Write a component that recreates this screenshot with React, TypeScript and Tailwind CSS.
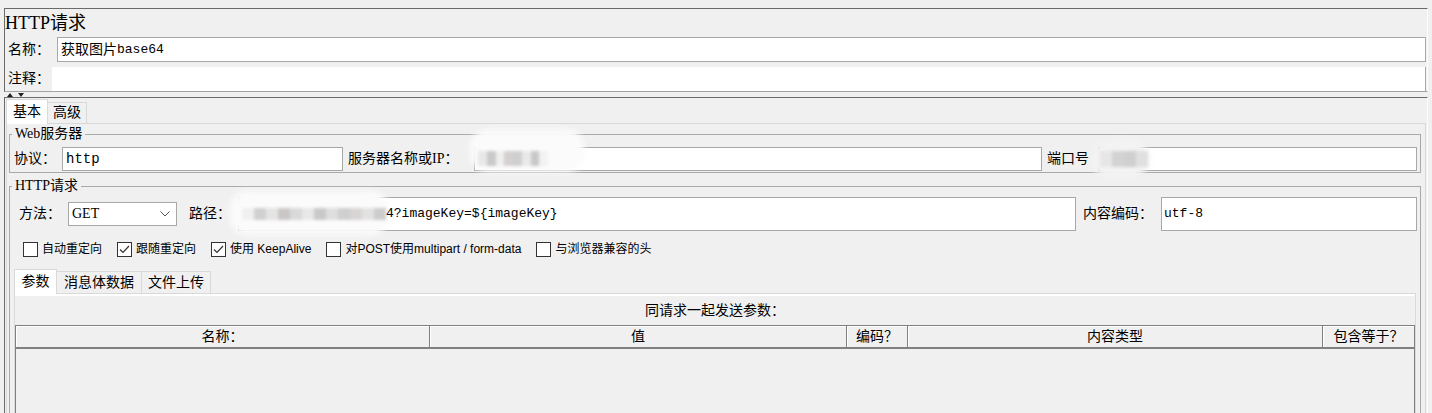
import React from "react";

const MONO = "font-['Liberation_Mono','Noto_Sans_CJK_SC',monospace] text-[13px]";
const SANS = "font-['Liberation_Sans','Noto_Sans_CJK_SC',sans-serif] text-[12px] leading-[14px]";

function Check({ checked }: { checked?: boolean }) {
  return (
    <span className="w-[15px] h-[15px] bg-white border border-[#333333] flex items-center justify-center shrink-0">
      {checked && (
        <svg width="11" height="9" viewBox="0 0 11 9">
          <polyline points="1,4.5 4,7.5 10,1" fill="none" stroke="#333" strokeWidth="1.2" />
        </svg>
      )}
    </span>
  );
}

function Blocks({ colors }: { colors: string[] }) {
  return (
    <span className="flex h-full blur-[1.5px]">
      {colors.map((c, i) => (
        <span key={i} className="flex-1 h-full" style={{ backgroundColor: c }} />
      ))}
    </span>
  );
}

function CheckItem({ checked, children }: { checked?: boolean; children: React.ReactNode }) {
  return (
    <div className="flex items-center gap-[4px]">
      <Check checked={checked} />
      <span className={SANS}>{children}</span>
    </div>
  );
}

export default function App() {
  return (
    <div className="w-[1432px] h-[413px] overflow-hidden bg-[#f0f0f0] text-black font-['Liberation_Serif','Noto_Sans_CJK_SC',serif] text-[14px] leading-[16px] pt-[8px] px-[4px]">
      {/* top panel */}
      <div className="border border-t-[#6b6b6b] border-l-[#6b6b6b] border-b-[#a3a3a3] border-r-[#fdfdfd]">
        <div className="h-[28px] flex items-center text-[18px] leading-[20px]">HTTP请求</div>
        <div className="h-[25px] flex">
          <div className="w-[52px] pl-[3px] flex items-center">名称：</div>
          <div className={`flex-1 mr-[1px] bg-white border border-[#a8a8a8] flex items-center pl-[3px] ${MONO}`}>
            <span className="text-[14px]">获取图片</span>base64
          </div>
        </div>
        <div className="h-[5px]" />
        <div className="h-[24px] flex">
          <div className="w-[47px] pl-[3px] flex items-center">注释：</div>
          <div className="flex-1 mr-[1px] bg-white border-r border-[#a8a8a8]" />
        </div>
      </div>

      {/* split divider */}
      <div className="h-[5px] flex items-end gap-[5px] pl-[3px]">
        <svg width="6" height="4" viewBox="0 0 6 4">
          <polygon points="3,0 6,4 0,4" fill="#222" />
        </svg>
        <svg width="6" height="4" viewBox="0 0 6 4">
          <polygon points="0,0 6,0 3,4" fill="#222" />
        </svg>
      </div>

      {/* lower panel */}
      <div className="h-[330px] border-t border-l border-r border-t-[#6b6b6b] border-l-[#6b6b6b] border-r-[#fdfdfd]">
        <div className="flex items-end pt-[1px] pl-[1px]">
          <div className="relative z-10 w-[42px] h-[25px] -mb-[1px] bg-white border border-b-0 border-[#d9d9d9] flex items-center justify-center pb-[1px]">
            基本
          </div>
          <div className="w-[39px] h-[21px] border border-b-0 border-l-0 border-[#d9d9d9] flex items-center justify-center">
            高级
          </div>
        </div>

        <div className="h-[300px] mx-[1px] border border-b-0 border-[#d9d9d9]">
          {/* Web server fieldset */}
          <fieldset className="ml-[2px] mr-[4px] mt-[2px] border border-[#a9a9a9] pb-[1px]">
            <legend className="ml-[2px] px-[3px] leading-[16px]">Web服务器</legend>
            <div className="mt-[5px] h-[24px] flex items-center pl-[4px] pr-[3px]">
              <div className="w-[48px]">协议：</div>
              <div className={`w-[281px] h-[24px] bg-white border border-[#a8a8a8] flex items-center pl-[3px] ${MONO} text-[14px]`}>
                http
              </div>
              <div className="w-[5px]" />
              <div className="w-[126px]">服务器名称或IP：</div>
              <div className="relative flex-1 h-[24px] bg-white border border-[#a8a8a8]">
                <span className="absolute left-[-5px] top-[-19px] w-[114px] h-[43px] rounded-[18px] bg-[#fbfbfb] blur-[3px]" />
                <span className="absolute left-[3px] top-[3px] w-[70px] h-[15px]">
                  <Blocks colors={["#e8e8e8", "#c9c9c9", "#efefef", "#d6cfcf", "#cfcfcf", "#e9e9e9", "#c8c8c8", "#f2f2f2"]} />
                </span>
              </div>
              <div className="w-[5px]" />
              <div className="w-[51px]">端口号</div>
              <div className="relative w-[319px] h-[24px] bg-white border border-[#a8a8a8]">
                <span className="absolute left-[-8px] top-[-8px] w-[58px] h-[38px] rounded-full bg-[#f3f3f3] blur-[3px]" />
                <span className="absolute left-[1px] top-[3px] w-[48px] h-[16px]">
                  <Blocks colors={["#e6e6e6", "#d3d3d3", "#cfcfcf", "#e0e0e0"]} />
                </span>
              </div>
            </div>
          </fieldset>

          {/* HTTP request fieldset */}
          <fieldset className="ml-[2px] mr-[4px] mt-[5px] border border-[#a9a9a9] h-[260px]">
            <legend className="ml-[2px] px-[3px] leading-[16px]">HTTP请求</legend>
            <div className="mt-[3px] h-[34px] flex items-center pl-[9px] pr-[3px]">
              <div className="w-[49px]">方法：</div>
              <div className="w-[109px] h-[24px] bg-white border border-[#a8a8a8] flex items-center justify-between pl-[3px] pr-[6px]">
                <span className="text-[14px]">GET</span>
                <svg width="10" height="6" viewBox="0 0 10 6">
                  <polyline points="0.5,0.5 5,5 9.5,0.5" fill="none" stroke="#555" strokeWidth="1" />
                </svg>
              </div>
              <div className="w-[12px]" />
              <div className="w-[49px]">路径：</div>
              <div className={`relative flex-1 h-[34px] bg-white border border-[#a8a8a8] flex items-center pl-[3px] ${MONO}`}>
                <span className="absolute left-[-9px] top-[-7px] w-[158px] h-[44px] rounded-[16px] bg-[#fbfbfb] blur-[3px]" />
                <span className="relative w-[144px] h-[12px]">
                  <Blocks colors={["#f0f0f0", "#d0d0d0", "#e4e4e4", "#cbc6c6", "#d9d9d9", "#e8e8e8", "#c9c9c9", "#dedede", "#cfcfcf", "#d8d4d4", "#e2e2e2", "#cccccc"]} />
                </span>
                <span className="relative">4?imageKey=${"{"}imageKey{"}"}</span>
              </div>
              <div className="w-[7px]" />
              <div className="w-[78px]">内容编码：</div>
              <div className={`w-[256px] h-[34px] bg-white border border-[#a8a8a8] flex items-center pl-[2px] ${MONO}`}>
                utf-8
              </div>
            </div>

            <div className="mt-[10px] h-[16px] flex items-center gap-[15px] pl-[13px]">
              <CheckItem>自动重定向</CheckItem>
              <CheckItem checked>跟随重定向</CheckItem>
              <CheckItem checked>使用 KeepAlive</CheckItem>
              <CheckItem>对POST使用multipart / form-data</CheckItem>
              <CheckItem>与浏览器兼容的头</CheckItem>
            </div>

            {/* sub tabs */}
            <div className="mt-[12px] flex items-end pl-[4px]">
              <div className="relative z-10 w-[43px] h-[25px] -mb-[1px] bg-white border border-b-0 border-[#d9d9d9] flex items-center justify-center pb-[1px]">
                参数
              </div>
              <div className="w-[85px] h-[22px] border border-b-0 border-l-0 border-[#d9d9d9] flex items-center justify-center">
                消息体数据
              </div>
              <div className="w-[69px] h-[22px] border border-b-0 border-l-0 border-[#d9d9d9] flex items-center justify-center">
                文件上传
              </div>
            </div>

            <div className="ml-[4px] mr-[4px] h-[200px] border border-b-0 border-[#d9d9d9]">
              <div className="h-[2px] bg-white" />
              <div className="h-[29px] flex items-center justify-center">同请求一起发送参数：</div>
              <div className="h-[100px] border-l border-r border-[#808080]">
                <div className="flex border-t border-b-2 border-t-[#808080] border-b-[#808080] text-[14px] leading-[16px]">
                  <div className="w-[414px] h-[21px] border-r border-[#808080] shadow-[inset_1px_1px_0_#ffffff] flex items-center justify-center">名称：</div>
                  <div className="w-[417px] h-[21px] border-r border-[#808080] shadow-[inset_1px_1px_0_#ffffff] flex items-center justify-center">值</div>
                  <div className="w-[61px] h-[21px] border-r border-[#808080] shadow-[inset_1px_1px_0_#ffffff] flex items-center justify-center">编码？</div>
                  <div className="w-[415px] h-[21px] border-r border-[#808080] shadow-[inset_1px_1px_0_#ffffff] flex items-center justify-center">内容类型</div>
                  <div className="w-[91px] h-[21px] shadow-[inset_1px_1px_0_#ffffff] flex items-center justify-center">包含等于？</div>
                </div>
              </div>
            </div>
          </fieldset>
        </div>
      </div>
    </div>
  );
}
